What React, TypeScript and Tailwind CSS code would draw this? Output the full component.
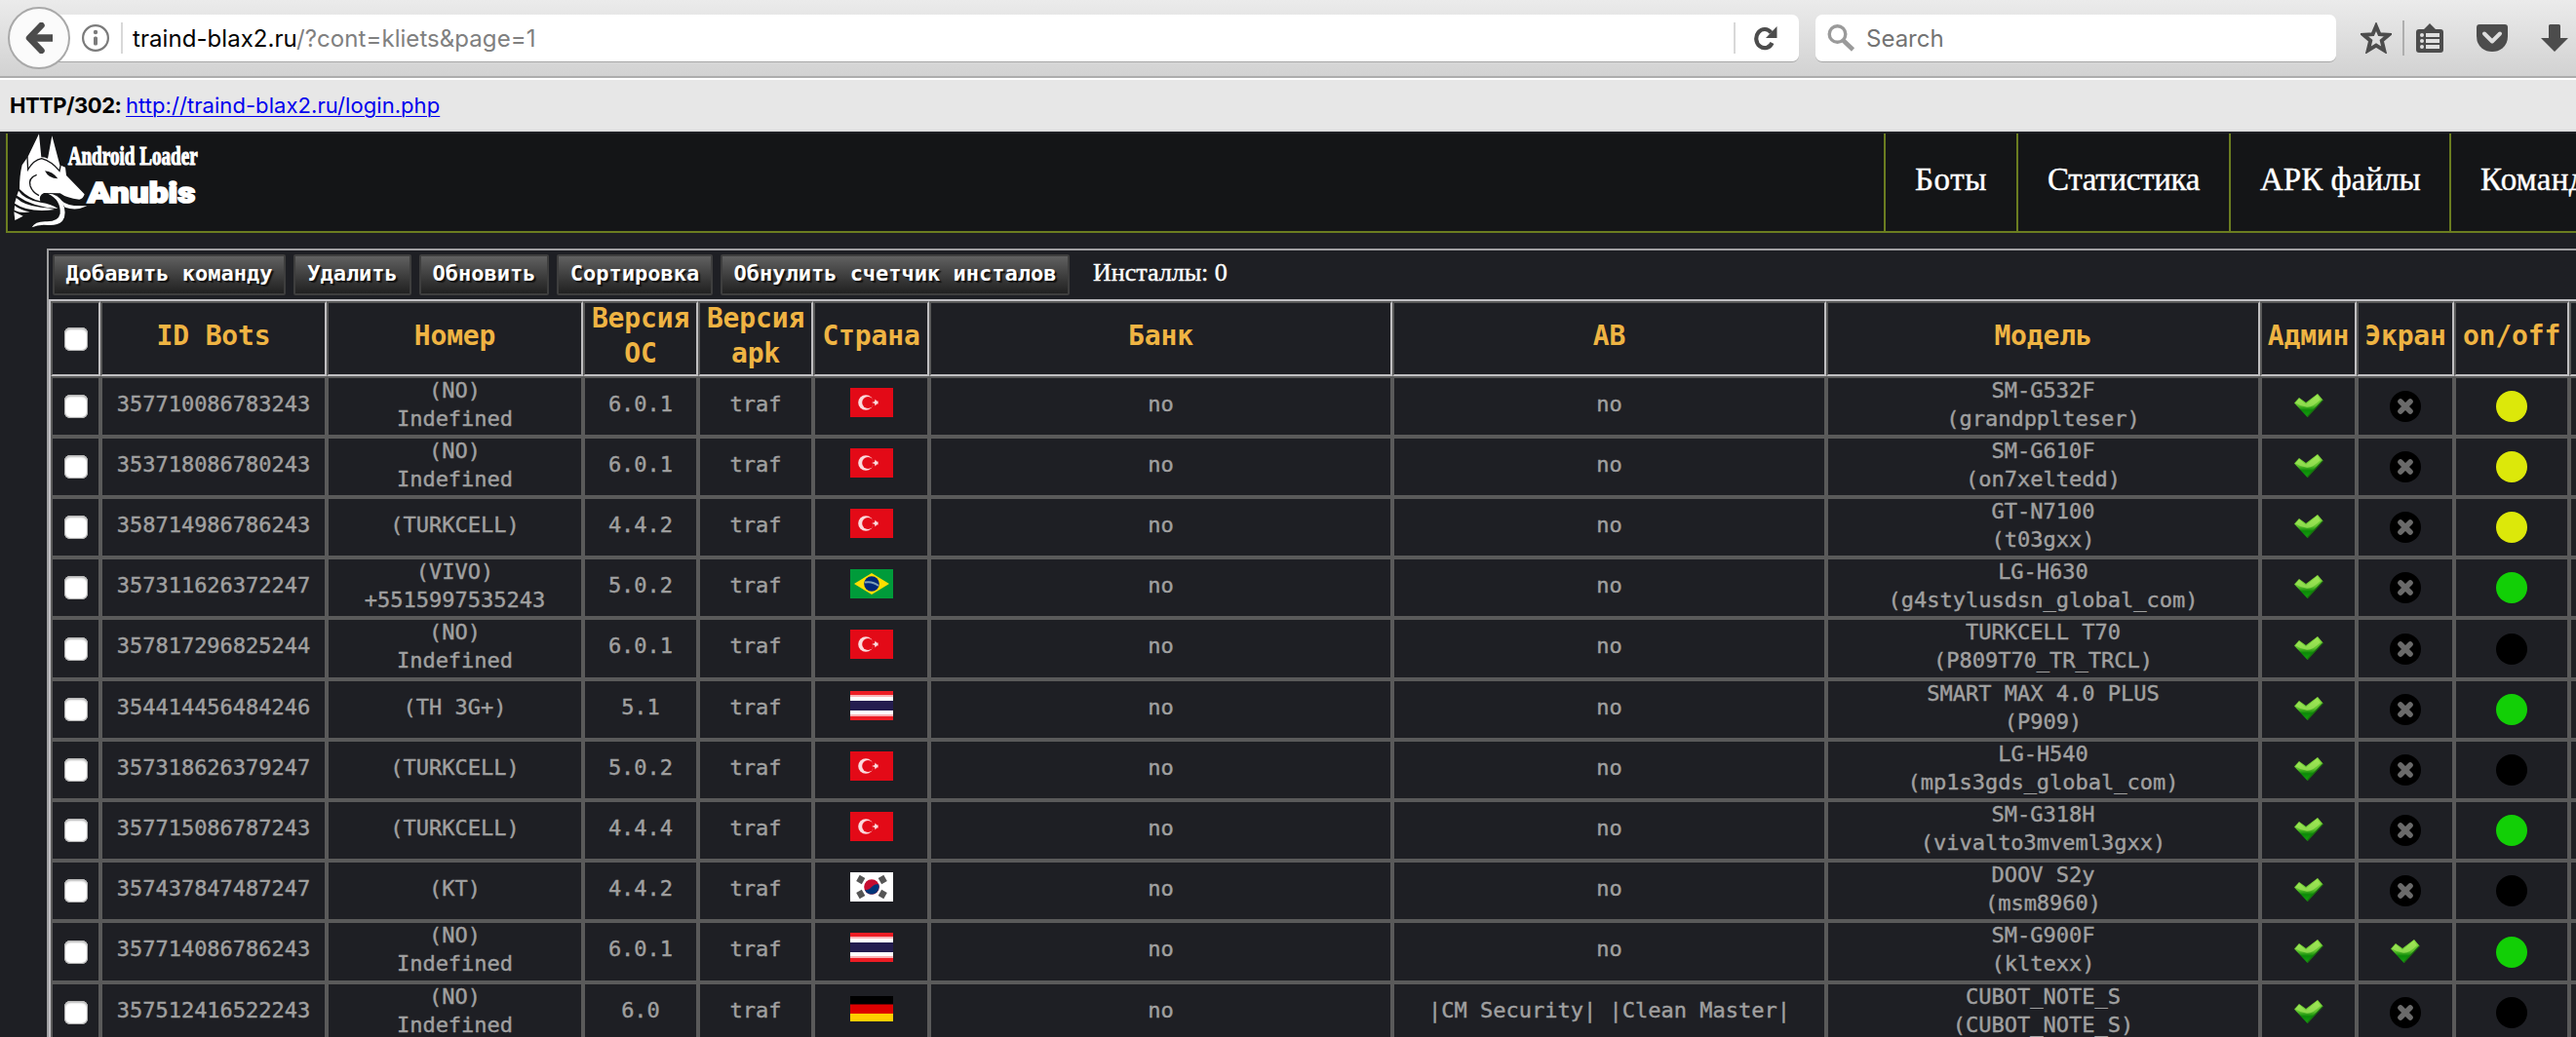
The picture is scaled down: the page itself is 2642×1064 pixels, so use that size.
import React from 'react';

type Flag = 'tr' | 'br' | 'th' | 'kr' | 'de';
type Status = 'yellow' | 'green' | 'black';

interface Bot {
  id: string;
  phone: string[];
  os: string;
  flag: Flag;
  av: string;
  model: string[];
  screen?: boolean;
  status: Status;
  height: string;
}

const NO = ['(NO)', 'Indefined'];
const H = 'h-[62px]';
const HT = 'h-[63px]';

const bots: Bot[] = [
  { id: '357710086783243', phone: NO, os: '6.0.1', flag: 'tr', av: 'no', model: ['SM-G532F', '(grandpplteser)'], status: 'yellow', height: H },
  { id: '353718086780243', phone: NO, os: '6.0.1', flag: 'tr', av: 'no', model: ['SM-G610F', '(on7xeltedd)'], status: 'yellow', height: H },
  { id: '358714986786243', phone: ['(TURKCELL)'], os: '4.4.2', flag: 'tr', av: 'no', model: ['GT-N7100', '(t03gxx)'], status: 'yellow', height: H },
  { id: '357311626372247', phone: ['(VIVO)', '+5515997535243'], os: '5.0.2', flag: 'br', av: 'no', model: ['LG-H630', '(g4stylusdsn_global_com)'], status: 'green', height: H },
  { id: '357817296825244', phone: NO, os: '6.0.1', flag: 'tr', av: 'no', model: ['TURKCELL T70', '(P809T70_TR_TRCL)'], status: 'black', height: HT },
  { id: '354414456484246', phone: ['(TH 3G+)'], os: '5.1', flag: 'th', av: 'no', model: ['SMART MAX 4.0 PLUS', '(P909)'], status: 'green', height: H },
  { id: '357318626379247', phone: ['(TURKCELL)'], os: '5.0.2', flag: 'tr', av: 'no', model: ['LG-H540', '(mp1s3gds_global_com)'], status: 'black', height: H },
  { id: '357715086787243', phone: ['(TURKCELL)'], os: '4.4.4', flag: 'tr', av: 'no', model: ['SM-G318H', '(vivalto3mveml3gxx)'], status: 'green', height: H },
  { id: '357437847487247', phone: ['(KT)'], os: '4.4.2', flag: 'kr', av: 'no', model: ['DOOV S2y', '(msm8960)'], status: 'black', height: H },
  { id: '357714086786243', phone: NO, os: '6.0.1', flag: 'th', av: 'no', model: ['SM-G900F', '(kltexx)'], screen: true, status: 'green', height: HT },
  { id: '357512416522243', phone: NO, os: '6.0', flag: 'de', av: '|CM Security| |Clean Master|', model: ['CUBOT_NOTE_S', '(CUBOT_NOTE_S)'], status: 'black', height: H },
];

const COLS =
  'grid grid-rows-[minmax(0,1fr)] grid-cols-[51px_232px_263px_118px_118px_119px_475px_445px_445px_99px_100px_118px_200px]';

const headers: string[][] = [
  ['ID Bots'], ['Номер'], ['Версия', 'ОС'], ['Версия', 'apk'], ['Страна'], ['Банк'],
  ['АВ'], ['Модель'], ['Админ'], ['Экран'], ['on/off'], [],
];

function FlagIcon({ code }: { code: Flag }) {
  if (code === 'tr')
    return (
      <svg width="44" height="30" viewBox="0 0 44 30">
        <rect width="44" height="30" fill="#e30a17" />
        <circle cx="16" cy="15" r="7.8" fill="#fbd9db" />
        <circle cx="18.2" cy="15" r="6" fill="#e30a17" />
        <path d="M22 15l3-1 .6-2.4 1.6 2h1.4v2.8h-1.4l-1.6 2L25 16z" fill="#fbd9db" />
      </svg>
    );
  if (code === 'br')
    return (
      <svg width="44" height="30" viewBox="0 0 44 30">
        <rect width="44" height="30" fill="#009b3a" />
        <path d="M4 15L22 4l18 11-18 11z" fill="#fedf00" />
        <circle cx="22" cy="15" r="7.8" fill="#002776" />
        <path d="M15 13.5q8-1.5 14 3.5" stroke="#7d9fb8" strokeWidth="2" fill="none" />
      </svg>
    );
  if (code === 'th')
    return (
      <svg width="44" height="30" viewBox="0 0 44 30">
        <rect width="44" height="30" fill="#ed1c24" />
        <rect y="4" width="44" height="22" fill="#f8b4b7" />
        <rect y="6" width="44" height="18" fill="#fff" />
        <rect y="10" width="44" height="10" fill="#241d4f" />
      </svg>
    );
  if (code === 'kr')
    return (
      <svg width="44" height="30" viewBox="0 0 44 30">
        <rect width="44" height="30" fill="#fff" />
        <circle cx="22" cy="15" r="7.8" fill="#c60c30" />
        <path d="M14.9 18.2A7.8 7.8 0 0 0 29.4 12.6C27 11.5 24 12.5 22 15C20 17.5 16.5 18.5 14.9 18.2z" fill="#003478" />
        <g fill="#555">
          <rect x="7.5" y="4" width="6.5" height="7" transform="rotate(30 10.7 7.5)" />
          <rect x="30" y="4" width="6.5" height="7" transform="rotate(-30 33.3 7.5)" />
          <rect x="7.5" y="19" width="6.5" height="7" transform="rotate(-30 10.7 22.5)" />
          <rect x="30" y="19" width="6.5" height="7" transform="rotate(30 33.3 22.5)" />
        </g>
      </svg>
    );
  return (
    <svg width="44" height="26" viewBox="0 0 44 26">
      <rect width="44" height="26" fill="#000" />
      <rect y="8.5" width="44" height="9.5" fill="#d00" />
      <rect y="18" width="44" height="8" fill="#ffce00" />
    </svg>
  );
}

function Check() {
  return (
    <svg width="30" height="24" viewBox="0 0 30 24">
      <path d="M0 9.5L5 4L12 9L24 0L29.5 6.5L13.5 24z" fill="url(#checkFill)" />
      <path d="M1 9.5L5 5L12 10.5L23.5 1.5L27 6Q18 15 12 13.5Q6 12.5 1 9.5z" fill="#b6f06a" opacity=".55" />
      <path d="M29.3 6.7L13.5 23.5" stroke="#1c6a12" strokeWidth="1.2" />
    </svg>
  );
}

function Cross() {
  return (
    <svg width="32" height="32" viewBox="0 0 32 32">
      <circle cx="16" cy="16" r="16" fill="#000" />
      <path d="M11 11l10 10M21 11L11 21" stroke="#6a6a6a" strokeWidth="5.6" strokeLinecap="round" />
    </svg>
  );
}

const dotColor: Record<Status, string> = {
  yellow: 'bg-[#dce80a]',
  green: 'bg-[#12cf06]',
  black: 'bg-black',
};

function Cell({ children }: { children?: React.ReactNode }) {
  return (
    <div className="flex flex-col items-center justify-center whitespace-nowrap border-2 border-[#5a5a5a]">
      {children}
    </div>
  );
}

function Lines({ lines }: { lines: string[] }) {
  return (
    <div className={lines.length > 1 ? 'pb-[5px] text-center' : 'pb-[6px] text-center'}>
      {lines.map((l) => (
        <div key={l}>{l}</div>
      ))}
    </div>
  );
}

function CheckBox() {
  return <div className="size-6 shrink-0 rounded-[6px] bg-white shadow-[inset_0_2px_2px_#bbb,inset_0_0_1px_1px_#aaa]" />;
}

function BotRow({ bot }: { bot: Bot }) {
  return (
    <div className={`${COLS} ${bot.height}`}>
      <Cell><CheckBox /></Cell>
      <Cell><Lines lines={[bot.id]} /></Cell>
      <Cell><Lines lines={bot.phone} /></Cell>
      <Cell><Lines lines={[bot.os]} /></Cell>
      <Cell><Lines lines={['traf']} /></Cell>
      <Cell><div className="pb-[9px]"><FlagIcon code={bot.flag} /></div></Cell>
      <Cell><Lines lines={['no']} /></Cell>
      <Cell><Lines lines={[bot.av]} /></Cell>
      <Cell><Lines lines={bot.model} /></Cell>
      <Cell><div className="pb-[2px]"><Check /></div></Cell>
      <Cell>{bot.screen ? <div className="pb-[2px]"><Check /></div> : <Cross />}</Cell>
      <Cell><div className={`size-8 rounded-full ${dotColor[bot.status]}`} /></Cell>
      <Cell />
    </div>
  );
}

function ToolButton({ label, width }: { label: string; width: string }) {
  return (
    <button
      className={`${width} h-[42px] shrink-0 whitespace-nowrap rounded-[2px] border-2 border-[#3e3e3e] bg-linear-to-b from-[#616161] to-[#212121] pb-[3px] text-center font-['DejaVu_Sans_Mono',monospace] text-[22px] leading-[34px] font-bold text-white [text-shadow:2px_2px_1px_#111]`}
    >
      {label}
    </button>
  );
}

function Logo() {
  return (
    <svg width="230" height="100" viewBox="24 21 690 300" className="shrink-0">
      <g fill="#fff">
        <path d="M120 22L127 94Q138 94 147 98L160 28L184 118L201 125L204 150L260 208Q256 222 244 224Q205 220 185 205L135 204Q118 212 124 229Q90 222 60 192Q60 150 68 118L86 92z" />
        <path d="M57 197Q75 225 125 233Q160 238 178 252Q100 247 52 212z" />
        <path d="M50 219Q75 243 125 248Q150 249 168 255Q90 266 45 236z" />
        <path d="M45 243Q65 258 92 262Q65 268 44 257z" />
        <path d="M43 262L71 275L46 288z" />
        <path d="M148 206Q178 206 192 232Q208 270 192 290Q178 304 150 303Q120 299 98 310Q108 290 145 292Q180 292 185 268Q188 225 148 206z" />
        <path d="M172 208Q192 240 228 243L268 244Q235 260 200 248z" />
      </g>
      <g fill="none" stroke="#141517" strokeWidth="4">
        <path d="M84 92L86 132Q104 102 128 98Q158 106 183 136L187 116" />
        <path d="M113 148Q86 158 93 182Q100 202 120 212" />
      </g>
      <path d="M138 136Q162 138 178 160Q150 160 138 136z" fill="#141517" />
      <text x="209" y="117" textLength="399" lengthAdjust="spacingAndGlyphs" fill="#fff" stroke="#fff" strokeWidth="3.5" fontFamily="Liberation Serif, serif" fontWeight="700" fontSize="84">Android Loader</text>
      <text x="269" y="235" textLength="332" lengthAdjust="spacingAndGlyphs" fill="#fff" stroke="#fff" strokeWidth="5" fontFamily="Roboto, sans-serif" fontWeight="900" fontSize="86">Anubis</text>
    </svg>
  );
}

function BrowserBar() {
  return (
    <div className="flex h-[78px] items-start bg-linear-to-b from-[#ebebeb] to-[#d2d2d2] pt-[7px] pl-[8px] font-[Inter,sans-serif] text-[24px]">
      <div className="z-10 flex size-16 shrink-0 items-center justify-center rounded-full border-2 border-[#a9a9a9] bg-[#fbfbfb]">
        <svg width="30" height="32" viewBox="0 0 30 32" fill="none" stroke="#4c4c4c" strokeWidth="6.5">
          <path d="M17.5 3L5 16l12.5 13" strokeLinecap="round" strokeLinejoin="round" />
          <path d="M6 16h23" strokeWidth="7.5" />
        </svg>
      </div>
      <div className="mt-2 -ml-3 flex h-[49px] w-[1785px] shrink-0 items-center rounded-r-[7px] border-b border-[#a6a6a6] bg-white pb-px pl-[24px]">
        <svg width="28" height="28" viewBox="0 0 28 28">
          <circle cx="14" cy="14" r="12.9" fill="none" stroke="#7b7b7b" strokeWidth="2.2" />
          <circle cx="14" cy="8" r="2.2" fill="#7b7b7b" />
          <rect x="12" y="12.5" width="4" height="9" rx="1.500" fill="#7b7b7b" />
        </svg>
        <div className="ml-[12px] h-8 w-[2px] bg-[#d8d8d8]" />
        <div className="ml-[10px] pt-[3px] tracking-[0.060px] whitespace-nowrap text-[#808080]">
          <span className="text-black">traind-blax2.ru</span>/?cont=kliets&amp;page=1
        </div>
        <div className="ml-auto h-8 w-[2px] bg-[#d8d8d8]" />
        <svg className="mr-[22px] ml-[19px]" width="24" height="26" viewBox="0 0 24 26">
          <path d="M17.5 7.5A8.6 9.6 0 1 0 18.5 18" fill="none" stroke="#4c4c4c" strokeWidth="4.2" />
          <path d="M23.5 1v12H12z" fill="#4c4c4c" />
        </svg>
      </div>
      <div className="mt-2 ml-[17px] flex h-[49px] w-[534px] shrink-0 items-center rounded-[7px] border-b border-[#a6a6a6] bg-white pb-px pl-3">
        <svg width="29" height="28" viewBox="0 0 29 28" fill="none" stroke="#9a9a9a">
          <circle cx="10.5" cy="10" r="8.3" strokeWidth="3.4" />
          <path d="M16.5 16.5L26.5 26" strokeWidth="4.5" />
        </svg>
        <span className="ml-[11px] pt-[3px] text-[#737373]">Search</span>
      </div>
      <div className="mt-[14px] ml-[25px] flex h-9 shrink-0 items-center">
        <svg width="32" height="32" viewBox="0 0 32 32">
          <path d="M16 4L19.5 12.200L28.8 12.8L21.8 18.8L24.200 28.6L16 23.6L7.800 28.6L10.200 18.8L3.200 12.8L12.500 12.200z" fill="none" stroke="#4c4c4c" strokeWidth="4" />
        </svg>
        <div className="ml-[11px] h-9 w-[2px] bg-[#aeaeae]" />
        <svg className="ml-[12px]" width="28" height="30" viewBox="0 0 28 30">
          <path d="M14 0L20 6H25Q28 6 28 9V27Q28 30 25 30H3Q0 30 0 27V9Q0 6 3 6H8z" fill="#4c4c4c" />
          <g fill="#e0e0e0">
            <rect x="10" y="10" width="14" height="4" />
            <rect x="10" y="16" width="14" height="4" />
            <rect x="10" y="22" width="14" height="4" />
            <circle cx="6" cy="12" r="2" />
            <circle cx="6" cy="18" r="2" />
            <circle cx="6" cy="24" r="2" />
          </g>
        </svg>
        <svg className="ml-[34px]" width="32" height="28" viewBox="0 0 32 28">
          <path d="M3 0H29Q32 0 32 3V12Q32 20 26.5 24.5Q22 28 16 28Q10 28 5.5 24.5Q0 20 0 12V3Q0 0 3 0z" fill="#4c4c4c" />
          <path d="M8 9.5L16 17.5L24 9.5" fill="none" stroke="#dedede" strokeWidth="4" strokeLinecap="round" strokeLinejoin="round" />
        </svg>
        <svg className="ml-[34px]" width="28" height="28" viewBox="0 0 28 28">
          <path d="M8 1.5Q8 0 9.5 0H18.5Q20 0 20 1.5V14H28L14 28L0 14H8z" fill="#4c4c4c" />
        </svg>
      </div>
    </div>
  );
}

const navItems = [
  { label: 'Боты', cls: 'w-[136px] tracking-[0.6px]' },
  { label: 'Статистика', cls: 'w-[218px] tracking-[-0.3px]' },
  { label: 'АРК файлы', cls: 'w-[226px]' },
  { label: 'Команды', cls: 'w-[190px] tracking-[0.3px]' },
];

export default function App() {
  return (
    <div className="h-[1064px] w-full overflow-hidden bg-[#1e1f24]">
      <svg width="0" height="0" className="absolute">
        <defs>
          <linearGradient id="checkFill" x1="0" y1="0" x2="0" y2="1">
            <stop offset="0" stopColor="#8fe043" />
            <stop offset=".5" stopColor="#5cc02c" />
            <stop offset=".7" stopColor="#0c8a08" />
            <stop offset="1" stopColor="#15a010" />
          </linearGradient>
        </defs>
      </svg>
      <BrowserBar />
      <div className="h-[2px] bg-[#acacac]" />
      <div className="h-[2px] bg-white" />
      <div className="flex h-[53px] items-center border-b-2 border-[#dcdcdc] bg-[#e7e7e7] pt-px pl-[10px] font-[Inter,sans-serif] text-[22px]">
        <b className="w-[114px] shrink-0 tracking-[-0.5px] whitespace-nowrap text-black">HTTP/302:</b>
        <a className="ml-[5px] tracking-[0.06px] whitespace-nowrap text-[#0000ee] underline decoration-[1px] underline-offset-[3px]">http://traind-blax2.ru/login.php</a>
      </div>

      <header className="mt-[2px] ml-[6px] flex h-[102px] justify-between overflow-hidden border-b-2 border-l-2 border-[#6b7d20] bg-[#141517]">
        <Logo />
        <nav className="-mr-[60px] flex shrink-0 font-['Liberation_Serif',serif] text-[33px] text-white [-webkit-text-stroke:0.4px_white]">
          {navItems.map((n) => (
            <div key={n.label} className={`${n.cls} shrink-0 border-l-2 border-[#6b7d20] pl-[30px] leading-[95px] whitespace-nowrap`}>
              {n.label}
            </div>
          ))}
        </nav>
      </header>

      <main className="mt-4 ml-12 w-[2900px] border-t-2 border-l-2 border-[#9f9fa1]">
        <div className="flex h-[50px] gap-2 pt-1 pl-1">
          <ToolButton label="Добавить команду" width="w-[239px]" />
          <ToolButton label="Удалить" width="w-[121px]" />
          <ToolButton label="Обновить" width="w-[133px]" />
          <ToolButton label="Сортировка" width="w-[160px]" />
          <ToolButton label="Обнулить счетчик инсталов" width="w-[358px]" />
          <span className="ml-4 font-['Liberation_Serif',serif] text-[26px] leading-[37px] text-white [-webkit-text-stroke:0.4px_white]">Инсталлы: 0</span>
        </div>
        <div className="border-t-2 border-l-2 border-[#c0bfc3] font-['DejaVu_Sans_Mono',monospace] text-[22px] leading-[29px] text-[#a0a0a0]">
          <div className={`${COLS} h-[77px] text-[28px] leading-[36px] font-bold text-[#efb443]`}>
            <div className="flex items-center justify-center border-2 border-t-[#5a5a5a] border-r-[#c0bfc1] border-b-[#c0bfc1] border-l-[#5a5a5a]">
              <CheckBox />
            </div>
            {headers.map((h, i) => (
              <div key={i} className="flex flex-col items-center justify-center border-2 border-t-[#5a5a5a] border-r-[#c0bfc1] border-b-[#c0bfc1] border-l-[#5a5a5a] whitespace-nowrap">
                <div className="pb-[5px] text-center tracking-[-0.15px]">
                  {h.map((l) => (
                    <div key={l}>{l}</div>
                  ))}
                </div>
              </div>
            ))}
          </div>
          <div className="[-webkit-text-stroke:0.4px_#a0a0a0]">
            {bots.map((b) => (
              <BotRow key={b.id} bot={b} />
            ))}
          </div>
        </div>
      </main>
    </div>
  );
}
